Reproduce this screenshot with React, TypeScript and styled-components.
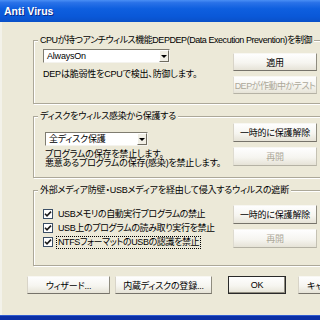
import React from "react";
import styled, { createGlobalStyle } from "styled-components";

const Global = createGlobalStyle`
  html, body { margin: 0; padding: 0; width: 320px; height: 320px; overflow: hidden; background: #ece9d8; }
  #root { width: 320px; height: 320px; overflow: hidden; }
`;

const Window = styled.div`
  width: 340px;
  height: 320px;
  display: flex;
  flex-direction: column;
  font-family: "Liberation Sans", "Noto Sans CJK JP", sans-serif;
  font-size: 9px;
  color: #000;
  font-feature-settings: "palt";
  letter-spacing: -0.2px;
`;

const TitleBar = styled.div`
  height: 22px;
  flex: none;
  display: flex;
  align-items: center;
  padding-left: 4px;
  background: linear-gradient(#4a8ff5 0%, #2a72e8 12%, #0e5fdf 40%, #0a58d8 75%, #0a50c8 100%);
  color: #fff;
  font-family: "Liberation Sans", Arial, sans-serif;
  font-weight: bold;
  font-size: 10.5px;
  letter-spacing: 0;
  text-shadow: 1px 1px 0 #0a2a8a;
`;

const Body = styled.div`
  flex: 1;
  background: #ece9d8;
  box-shadow: inset 2px 0 0 #f3f2ea;
  padding: 12px 0 0 27px;
  display: flex;
  flex-direction: column;
`;

const GroupStack = styled.div`
  display: flex;
  flex-direction: column;
  gap: 6px;
  padding-left: 6px;
`;

const Group = styled.fieldset<{ $pb: number }>`
  margin: 0;
  width: 293px;
  box-sizing: border-box;
  padding: 0 8px ${(p) => p.$pb}px 9px;
  border: 1px solid #aca899;
  box-shadow: inset 1px 1px 0 #fff, 1px 1px 0 #fff;
  min-width: 0;
`;

const Legend = styled.legend<{ $ls?: number }>`
  margin-left: -5px;
  padding: 0 2px;
  height: 12px;
  line-height: 12px;
  white-space: nowrap;
  letter-spacing: ${(p) => p.$ls ?? -0.2}px;
  background: #ece9d8;
`;

const GroupContent = styled.div`
  display: grid;
  grid-template-columns: 1fr 84px;
  column-gap: 6px;
`;

const LeftCol = styled.div<{ $mt: number; $ml?: number }>`
  display: flex;
  flex-direction: column;
  padding-top: ${(p) => p.$mt}px;
  padding-left: ${(p) => p.$ml ?? 0}px;
`;

const RightCol = styled.div<{ $mt: number }>`
  display: flex;
  flex-direction: column;
  gap: 5px;
  padding-top: ${(p) => p.$mt}px;
`;

const Combo = styled.div<{ $w: number }>`
  width: ${(p) => p.$w}px;
  height: 14px;
  box-sizing: border-box;
  background: #fff;
  border: 1px solid;
  border-color: #7f7c70 #f4f3ee #f4f3ee #7f7c70;
  display: flex;
  align-items: stretch;
`;

const ComboText = styled.span`
  flex: 1;
  padding-left: 3px;
  line-height: 12px;
  white-space: nowrap;
`;

const ComboArrow = styled.span`
  width: 10px;
  box-sizing: border-box;
  background: #f1efe6;
  border: 1px solid;
  border-color: #fff #6f6c60 #6f6c60 #fff;
  display: flex;
  align-items: center;
  justify-content: center;
  &::after {
    content: "";
    border-left: 3px solid transparent;
    border-right: 3px solid transparent;
    border-top: 3px solid #000;
  }
`;

const Text = styled.div<{ $mt?: number; $lh?: number }>`
  margin-top: ${(p) => p.$mt ?? 0}px;
  line-height: ${(p) => p.$lh ?? 12}px;
  white-space: nowrap;
`;

const Btn = styled.button<{ $w?: number; $ml?: number; $default?: boolean; $h?: number; $ls?: number }>`
  width: ${(p) => (p.$w ? `${p.$w}px` : "100%")};
  height: ${(p) => p.$h ?? 19}px;
  margin: 0 0 0 ${(p) => p.$ml ?? 0}px;
  padding: 0;
  flex: none;
  box-sizing: border-box;
  font-family: inherit;
  font-size: 9px;
  letter-spacing: ${(p) => p.$ls ?? -0.2}px;
  font-feature-settings: "palt";
  color: #000;
  background: linear-gradient(#fefefe 0%, #f6f5f0 55%, #e6e3d7 100%);
  border: 1px solid;
  border-color: ${(p) => (p.$default ? "#2a2a2a" : "#f8f7f2 #8f8c7f #76736a #d8d4c8")};
  box-shadow: ${(p) => (p.$default ? "inset -1px -1px 0 #8f8c7f" : "none")};
  white-space: nowrap;
  overflow: hidden;
  &:disabled {
    color: #aca899;
    border-color: #f8f7f2 #c4c1b3 #b5b2a5 #dedbd0;
  }
`;

const CheckRow = styled.div`
  display: flex;
  align-items: center;
  height: 14px;
  gap: 4px;
  white-space: nowrap;
`;

const CheckBox = styled.span`
  width: 10px;
  height: 10px;
  box-sizing: border-box;
  border: 1px solid #3b4f66;
  background: #fff;
  display: flex;
  align-items: center;
  justify-content: center;
  flex: none;
`;

const CheckLabel = styled.span<{ $focus?: boolean }>`
  line-height: 11px;
  padding: 0 1px;
  letter-spacing: -0.4px;
  outline: ${(p) => (p.$focus ? "1px dotted #000" : "none")};
`;

const ButtonRow = styled.div`
  display: flex;
  margin-top: 10px;
`;

const BottomFrame = styled.div`
  height: 4px;
  flex: none;
  background: #0b2fa5;
  border-top: 1px solid #2f5bd0;
`;

const Check = () => (
  <svg width="8" height="8" viewBox="0 0 8 8">
    <path d="M1 3.8 L3 5.8 L7 1.6" fill="none" stroke="#1a1a1a" strokeWidth="1.6" />
  </svg>
);

const CheckItem = ({ label, focus }: { label: string; focus?: boolean }) => (
  <CheckRow>
    <CheckBox>
      <Check />
    </CheckBox>
    <CheckLabel $focus={focus}>{label}</CheckLabel>
  </CheckRow>
);

export default function App() {
  return (
    <>
      <Global />
      <Window>
        <TitleBar>Anti Virus</TitleBar>
        <Body>
          <GroupStack>
            <Group $pb={9}>
              <Legend $ls={-0.45}>CPUが持つアンチウィルス機能DEPDEP(Data Execution Prevention)を制御</Legend>
              <GroupContent>
                <LeftCol $mt={3}>
                  <Combo $w={127}>
                    <ComboText>AlwaysOn</ComboText>
                    <ComboArrow />
                  </Combo>
                  <Text $mt={5}>DEPは脆弱性をCPUで検出、防御します。</Text>
                </LeftCol>
                <RightCol $mt={7}>
                  <Btn $h={18}>適用</Btn>
                  <Btn $h={18} $ls={-0.5} disabled>DEPが作動中かテスト</Btn>
                </RightCol>
              </GroupContent>
            </Group>
            <Group $pb={9}>
              <Legend>ディスクをウィルス感染から保護する</Legend>
              <GroupContent>
                <LeftCol $mt={10} $ml={2}>
                  <Combo $w={103}>
                    <ComboText>全ディスク保護</ComboText>
                    <ComboArrow />
                  </Combo>
                  <Text $mt={4} $lh={9}>プログラムの保存を禁止します。</Text>
                  <Text $lh={9}>悪意あるプログラムの保存(感染)を禁止します。</Text>
                </LeftCol>
                <RightCol $mt={1}>
                  <Btn>一時的に保護解除</Btn>
                  <Btn disabled>再開</Btn>
                </RightCol>
              </GroupContent>
            </Group>
            <Group $pb={16}>
              <Legend>外部メディア防壁・USBメディアを経由して侵入するウィルスの遮断</Legend>
              <GroupContent>
                <LeftCol $mt={11}>
                  <CheckItem label="USBメモリの自動実行プログラムの禁止" />
                  <CheckItem label="USB上のプログラムの読み取り実行を禁止" />
                  <CheckItem label="NTFSフォーマットのUSBの認識を禁止" focus />
                </LeftCol>
                <RightCol $mt={9}>
                  <Btn>一時的に保護解除</Btn>
                  <Btn disabled>再開</Btn>
                </RightCol>
              </GroupContent>
            </Group>
          </GroupStack>
          <ButtonRow>
            <Btn $w={83} $h={18}>ウィザード...</Btn>
            <Btn $w={97} $h={18} $ml={5}>内蔵ディスクの登録...</Btn>
            <Btn $w={58} $h={18} $ml={16} $default>OK</Btn>
            <Btn $w={58} $h={18} $ml={12}>キャンセル</Btn>
          </ButtonRow>
        </Body>
        <BottomFrame />
      </Window>
    </>
  );
}
